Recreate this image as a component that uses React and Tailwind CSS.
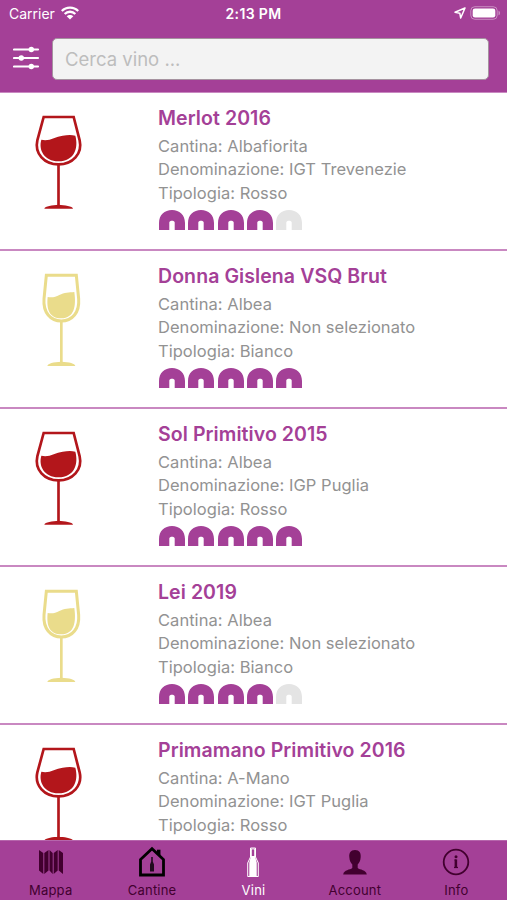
import React from 'react';

const wines = [
    { name: 'Merlot 2016', winery: 'Albafiorita', denomination: 'IGT Trevenezie', type: 'Rosso', rating: 4 },
    { name: 'Donna Gislena VSQ Brut', winery: 'Albea', denomination: 'Non selezionato', type: 'Bianco', rating: 5 },
    { name: 'Sol Primitivo 2015', winery: 'Albea', denomination: 'IGP Puglia', type: 'Rosso', rating: 5 },
    { name: 'Lei 2019', winery: 'Albea', denomination: 'Non selezionato', type: 'Bianco', rating: 4 },
    { name: 'Primamano Primitivo 2016', winery: 'A-Mano', denomination: 'IGT Puglia', type: 'Rosso', rating: 4 },
];

const RedGlass = () => (
    <svg className="w-20 h-[110px]" viewBox="0 0 240 330" fill="none">
        <path d="M71 36H161L179 106C188 146 158 178 115.500 178S43 146 52 106Z" stroke="#b3161b" strokeWidth="8" />
        <path d="M64 104C88 110 105 95 128 92C142 90 154 89 166 92C176 130 163 168 115.500 169C72 168 55 134 64 104Z" fill="#b3161b" />
        <path d="M115.500 178V304" stroke="#b3161b" strokeWidth="8" />
        <path d="M73 311C74 303 98 300 115.500 299C133 300 158 303 159 311Z" fill="#b3161b" />
    </svg>
);

const WhiteGlass = () => (
    <svg className="w-20 h-[110px]" viewBox="0 0 240 330" fill="none">
        <path d="M79 37H169L176 108C179 148 157 174 124 174S69 148 72 108Z" stroke="#eadc8b" strokeWidth="9" />
        <path d="M83 102C95 104 106 103 118 96C133 88 147 89 163 87C169 130 163 165 124 166C88 166 79 139 83 102Z" fill="#eadc8b" />
        <path d="M124 174V302" stroke="#eadc8b" strokeWidth="8" />
        <path d="M82 309C83 301 100 297 124 296C148 297 165 301 166 309Z" fill="#eadc8b" />
    </svg>
);

const Rating = ({ value }) => (
    <div className="flex gap-[3.300px] mt-[5px] ml-px">
        {[1, 2, 3, 4, 5].map((n) => (
            <svg key={n} className="w-[26px] h-5" viewBox="0 0 26 20" fill={n <= value ? '#a44097' : '#e4e4e4'}>
                <path d="M0 20V13C0 5 5.500 0 13 0S26 5 26 13V20H15.700V12.500C15.700 10 10.300 10 10.300 12.500V20Z" />
            </svg>
        ))}
    </div>
);

const WineRow = ({ wine }) => (
    <li className="h-[158px] shrink-0 flex border-b-2 border-[#c988c1]">
        <div className="w-[158px] shrink-0 pl-5 pt-3">
            {wine.type === 'Rosso' ? <RedGlass /> : <WhiteGlass />}
        </div>
        <div className="pt-[11px] whitespace-nowrap">
            <h2 className="text-[19.5px] leading-7 font-semibold tracking-[0.08px] text-[#a44097]">{wine.name}</h2>
            <div className="mt-[3px] text-[16.5px] leading-[23.3px] tracking-[0.04px] text-[#929292]">
                <p>Cantina: {wine.winery}</p>
                <p>Denominazione: {wine.denomination}</p>
                <p>Tipologia: {wine.type}</p>
            </div>
            <Rating value={wine.rating} />
        </div>
    </li>
);

const StatusBar = () => (
    <div className="h-7 grid grid-cols-3 items-center pl-[9px] pr-[6px] text-white text-[14px]">
        <div className="flex items-center gap-[6px]">
            <span className="-mt-px">Carrier</span>
            <svg className="w-[18px] h-[14px] -mt-[3px]" viewBox="0 0 18 14" fill="none" stroke="currentColor" strokeWidth="2.300">
                <path d="M.8 5C5.300.4 12.700.4 17.200 5M3.700 8C6.600 5 11.400 5 14.300 8" />
                <path d="M5.700 10.300C7.600 8.400 10.400 8.400 12.300 10.300L9 13.600Z" fill="currentColor" stroke="none" />
            </svg>
        </div>
        <span className="text-center font-semibold -mt-px -ml-[3px] tracking-[0.35px]">2:13 PM</span>
        <div className="flex items-center justify-end gap-1 -mt-[2px]">
            <svg className="w-3 h-3" viewBox="0 0 12 12" fill="none" stroke="currentColor" strokeWidth="1.500" strokeLinejoin="round">
                <path d="M11 1L1 5.300L5.800 6.200L6.700 11Z" />
            </svg>
            <svg className="w-[31px] h-[14px]" viewBox="0 0 31 14" fill="none">
                <rect x=".8" y=".7" width="26.400" height="12.600" rx="4" stroke="white" strokeOpacity=".4" />
                <rect x="2.700" y="2.500" width="22.600" height="9" rx="2.300" fill="white" />
                <path d="M28.500 4.700C30.600 5.300 30.600 8.700 28.500 9.300Z" fill="white" fillOpacity=".4" />
            </svg>
        </div>
    </div>
);

const FilterIcon = () => (
    <svg className="w-[27px] h-6 -mt-[2px]" viewBox="0 0 27 24" stroke="white" strokeWidth="2.200" fill="white" strokeLinecap="round">
        <path d="M1 3.500H25M1 12H25M1 20.500H25" />
        <g stroke="none">
            <circle cx="18.300" cy="3.500" r="2.700" />
            <circle cx="8.300" cy="12" r="2.700" />
            <circle cx="18.300" cy="20.500" r="2.700" />
        </g>
    </svg>
);

const tabs = [
    {
        label: 'Mappa',
        icon: (
            <svg className="w-8 h-8" viewBox="0 0 32 32" fill="currentColor">
                <path d="M4 4L8.300 7V28L4 24.500ZM9.300 7L13.500 4V24.500L9.300 28ZM14.500 4L17.700 7V28L14.500 24.500ZM18.700 7L22.700 4V24.500L18.700 28ZM23.700 4L28 7V28L23.700 24.500Z" />
            </svg>
        ),
    },
    {
        label: 'Cantine',
        icon: (
            <svg className="w-8 h-8" viewBox="0 0 32 32" fill="none" stroke="black" strokeWidth="2.800">
                <path d="M4.500 29V13.500L16 2.700L27.500 13.500V29Z" />
                <path d="M22.700 9V3.700" strokeWidth="3.500" />
                <path d="M15.200 11H16.800V15.500L18 18.500V25.500H14V18.500L15.200 15.500Z" fill="#210b1e" stroke="none" />
            </svg>
        ),
    },
    {
        label: 'Vini',
        icon: (
            <svg className="w-8 h-8" viewBox="0 0 32 32" fill="none" stroke="white">
                <path d="M13.500 2H18.500V11L21.300 17V30.500H10.700V17L13.500 11Z" strokeWidth="1" />
                <path d="M14 10H18L19.700 16.500V30H12.300V16.500Z" fill="white" stroke="none" />
                <path d="M14 3H18M14.500 3V10M17.500 3V10" strokeWidth=".8" />
            </svg>
        ),
    },
    {
        label: 'Account',
        icon: (
            <svg className="w-8 h-8" viewBox="0 0 32 32" fill="currentColor">
                <path d="M16 4C11.500 4 10 7 10.300 11C10.500 15 12 17 13.300 18.500V22C11 24 5 23.500 4.200 28.500H27.800C27 23.500 21 24 18.700 22V18.500C20 17 21.500 15 21.700 11C22 7 20.500 4 16 4Z" />
            </svg>
        ),
    },
    {
        label: 'Info',
        icon: (
            <svg className="w-8 h-8" viewBox="0 0 32 32" fill="none" stroke="currentColor" strokeWidth="1.800">
                <circle cx="16" cy="16" r="12.300" />
                <circle cx="16" cy="10.800" r="1.500" fill="currentColor" stroke="none" />
                <path d="M14.300 14H15.300V21.500" strokeWidth="1.200" />
                <path d="M16 13.400V21.500" strokeWidth="2.300" />
                <path d="M14 21.500H18" strokeWidth="1.200" />
            </svg>
        ),
    },
];

const TabBar = ({ active }) => (
    <nav className="h-[60px] shrink-0 bg-[#a44097] border-t border-[#b666ac] grid grid-cols-5 text-[13px]">
        {tabs.map((tab) => (
            <button
                key={tab.label}
                className={`flex flex-col items-center pt-[5px] ${tab.label === active ? 'text-white' : 'text-[#42002f]'}`}
            >
                {tab.icon}
                <span className="mt-1 leading-4 tracking-[0.2px]">{tab.label}</span>
            </button>
        ))}
    </nav>
);

export default function App() {
    return (
        <div className="h-screen w-full flex flex-col overflow-hidden bg-white font-['Inter',sans-serif]">
            <header className="h-[93px] shrink-0 bg-[#a44097] border-b border-[#c988c1]">
                <StatusBar />
                <div className="flex items-center pl-[13px] pr-[18px] pt-[10px]">
                    <FilterIcon />
                    <input
                        type="text"
                        placeholder="Cerca vino ..."
                        className="ml-3 h-[42px] min-w-0 flex-1 rounded-[5px] border border-[#a5929f] bg-[#f3f3f3] px-3 text-[18.5px] placeholder:text-[#bdbdbd] outline-none"
                    />
                </div>
            </header>
            <ul className="flex-1 min-h-0 overflow-hidden flex flex-col">
                {wines.map((wine) => (
                    <WineRow key={wine.name} wine={wine} />
                ))}
            </ul>
            <TabBar active="Vini" />
        </div>
    );
}
